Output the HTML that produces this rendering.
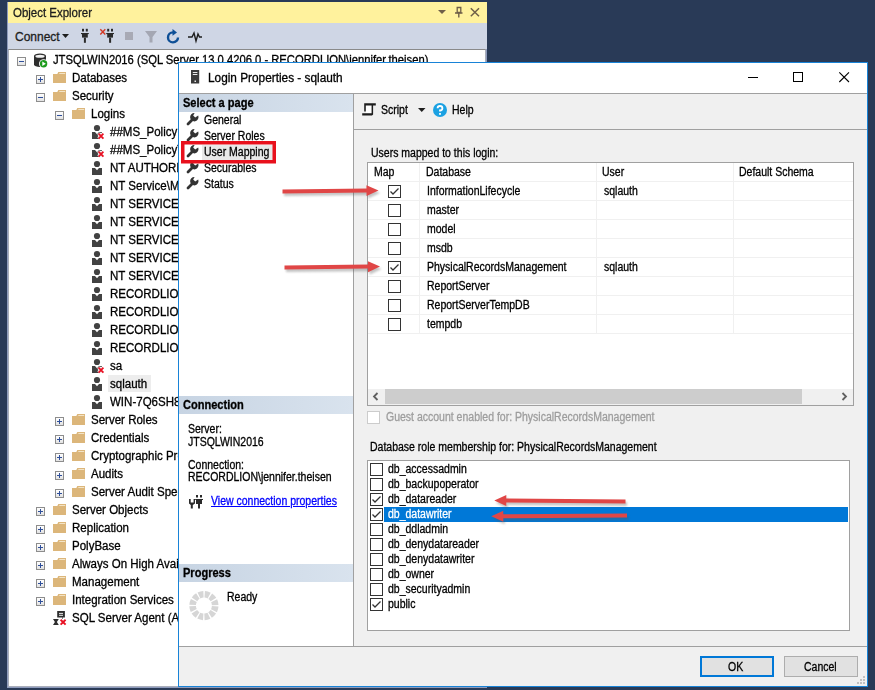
<!DOCTYPE html>
<html><head><meta charset="utf-8">
<style>
*{margin:0;padding:0;box-sizing:border-box}
html,body{width:875px;height:690px;overflow:hidden;background:#293a57;font-family:"Liberation Sans",sans-serif;position:relative}
.a{position:absolute}
.t{position:absolute;white-space:nowrap;line-height:1;transform-origin:0 0;-webkit-text-stroke:0.3px currentColor}
svg{position:absolute;overflow:visible}
</style></head><body>

<div class="a" style="left:7px;top:2px;width:480px;height:686px;background:#8e9bbc"></div>
<div class="a" style="left:8px;top:2px;width:479px;height:21px;background:#fff29d"></div>
<div class="a" style="left:8px;top:23px;width:479px;height:26px;background:#cfd6e5"></div>
<div class="a" style="left:8px;top:49px;width:478px;height:638px;background:#fff;border-top:1px solid #8a8a8a;border-right:1px solid #a9aebb;border-bottom:1px solid #a9aebb;border-left:1px solid #a9aebb"></div>
<div class="t" style="left:13px;top:7.40px;font-size:12px;transform:scaleX(0.955);color:#1e1e1e;font-weight:400;">Object Explorer</div>
<svg style="left:438px;top:7px" width="50" height="12"><path d="M0 3 L8 3 L4 7 Z" fill="#6f5f48"/><path d="M19.2 0.5 V5.5 H22.8 V0.5 Z" stroke="#6f5f48" stroke-width="1.3" fill="none"/><path d="M17 6 H24.5 M20.8 6 V10.5" stroke="#6f5f48" stroke-width="1.4" fill="none"/><path d="M32.8 1.2 L41 9.2 M41 1.2 L32.8 9.2" stroke="#6f5f48" stroke-width="1.5"/></svg>
<div class="t" style="left:15px;top:31.40px;font-size:12px;transform:scaleX(1.0);color:#1e1e1e;font-weight:400;">Connect</div>
<svg style="left:62px;top:34px" width="8" height="5"><path d="M0 0 H7 L3.5 4 Z" fill="#1e1e1e"/></svg>
<svg style="left:0;top:0" width="875" height="60"><g fill="#2b2b2b"><rect x="82" y="28.8" width="2" height="2.7"/><rect x="85.8" y="28.8" width="2" height="2.7"/><rect x="81" y="33.0" width="7.8" height="1.1"/><rect x="82" y="33.0" width="5.8" height="4.6"/><rect x="83.9" y="37.6" width="2" height="5.2"/></g><g fill="#2b2b2b"><rect x="107.2" y="28.8" width="2" height="2.7"/><rect x="111.0" y="28.8" width="2" height="2.7"/><rect x="106.2" y="33.0" width="7.8" height="1.1"/><rect x="107.2" y="33.0" width="5.8" height="4.6"/><rect x="109.10000000000001" y="37.6" width="2" height="5.2"/></g><path d="M100.3 29.3 L105.3 34.5 M105.3 29.3 L100.3 34.5" stroke="#d43a26" stroke-width="1.4"/><rect x="125" y="32" width="8" height="8" fill="#a8aab5"/><path d="M145 31 H157 L152.5 37 V42.5 H149.5 V37 Z" fill="#a4a7b3"/><path d="M178 37.4 A5 5 0 1 1 173 32.4" stroke="#0e4f96" stroke-width="2.4" fill="none"/><path d="M172.5 29 L177 32.4 L172.5 35.8 Z" fill="#0e4f96"/><path d="M188 37 H192 L194 33 L196 41 L198 34 L199.5 37 H202" stroke="#1e1e1e" stroke-width="1.4" fill="none"/></svg>
<div class="a" style="left:17px;top:57px;width:9px;height:9px;border:1px solid #8d8d8d;background:linear-gradient(#fff,#e2e2e2)"></div><div class="a" style="left:19px;top:61px;width:5px;height:1px;background:#2f4f9a"></div>
<svg style="left:34px;top:52.5px" width="16" height="16"><path d="M0 3 A6 2.6 0 0 1 12 3 V11.5 A6 2.6 0 0 1 0 11.5 Z" fill="#2e2e2e"/><ellipse cx="6" cy="3.2" rx="4.6" ry="1.5" fill="#f2f2f2"/><circle cx="9.6" cy="10.8" r="4.6" fill="#fff"/><circle cx="9.6" cy="10.8" r="3.7" fill="#1e9b1e"/><path d="M8.3 8.6 L11.8 10.8 L8.3 13 Z" fill="#fff"/></svg>
<div class="t" style="left:53px;top:54.40px;font-size:12px;transform:scaleX(0.935);color:#000;font-weight:400;">JTSQLWIN2016 (SQL Server 13.0.4206.0 - RECORDLION\jennifer.theisen)</div>
<div class="a" style="left:36px;top:75px;width:9px;height:9px;border:1px solid #8d8d8d;background:linear-gradient(#fff,#e2e2e2)"></div><div class="a" style="left:38px;top:79px;width:5px;height:1px;background:#2f4f9a"></div><div class="a" style="left:40px;top:77px;width:1px;height:5px;background:#2f4f9a"></div>
<svg style="left:53px;top:72px" width="14" height="12"><path d="M0 2 H4.3 L5.3 0 H13 V11 H0 Z" fill="#dcb67a"/><path d="M6.3 1.5 H12.2" stroke="#f3e4c6" stroke-width="1"/></svg>
<div class="t" style="left:71.6px;top:72.40px;font-size:12px;transform:scaleX(0.96);color:#000;font-weight:400;">Databases</div>
<div class="a" style="left:36px;top:93px;width:9px;height:9px;border:1px solid #8d8d8d;background:linear-gradient(#fff,#e2e2e2)"></div><div class="a" style="left:38px;top:97px;width:5px;height:1px;background:#2f4f9a"></div>
<svg style="left:53px;top:90px" width="14" height="12"><path d="M0 2 H4.3 L5.3 0 H13 V11 H0 Z" fill="#dcb67a"/><path d="M6.3 1.5 H12.2" stroke="#f3e4c6" stroke-width="1"/></svg>
<div class="t" style="left:71.6px;top:90.40px;font-size:12px;transform:scaleX(0.96);color:#000;font-weight:400;">Security</div>
<div class="a" style="left:55px;top:111px;width:9px;height:9px;border:1px solid #8d8d8d;background:linear-gradient(#fff,#e2e2e2)"></div><div class="a" style="left:57px;top:115px;width:5px;height:1px;background:#2f4f9a"></div>
<svg style="left:72px;top:108px" width="14" height="12"><path d="M0 2 H4.3 L5.3 0 H13 V11 H0 Z" fill="#dcb67a"/><path d="M6.3 1.5 H12.2" stroke="#f3e4c6" stroke-width="1"/></svg>
<div class="t" style="left:90.6px;top:108.40px;font-size:12px;transform:scaleX(0.96);color:#000;font-weight:400;">Logins</div>
<svg style="left:92px;top:125px" width="16" height="15"><circle cx="5" cy="3" r="3.1" fill="#424242"/><path d="M0 7 H3 L5 9.3 L7 7 H10 V14 H0 Z" fill="#424242"/><path d="M6.6 8.6 L11.4 13.6 M11.4 8.6 L6.6 13.6" stroke="#fff" stroke-width="3.6"/><path d="M6.6 8.6 L11.4 13.6 M11.4 8.6 L6.6 13.6" stroke="#e81123" stroke-width="1.8"/></svg>
<div class="t" style="left:109.5px;top:126.40px;font-size:12px;transform:scaleX(0.96);color:#000;font-weight:400;">##MS_PolicyEventProcessingLogin##</div>
<svg style="left:92px;top:143px" width="16" height="15"><circle cx="5" cy="3" r="3.1" fill="#424242"/><path d="M0 7 H3 L5 9.3 L7 7 H10 V14 H0 Z" fill="#424242"/><path d="M6.6 8.6 L11.4 13.6 M11.4 8.6 L6.6 13.6" stroke="#fff" stroke-width="3.6"/><path d="M6.6 8.6 L11.4 13.6 M11.4 8.6 L6.6 13.6" stroke="#e81123" stroke-width="1.8"/></svg>
<div class="t" style="left:109.5px;top:144.40px;font-size:12px;transform:scaleX(0.96);color:#000;font-weight:400;">##MS_PolicyTsqlExecutionLogin##</div>
<svg style="left:92px;top:161px" width="16" height="15"><circle cx="5" cy="3" r="3.1" fill="#424242"/><path d="M0 7 H3 L5 9.3 L7 7 H10 V14 H0 Z" fill="#424242"/></svg>
<div class="t" style="left:109.5px;top:162.40px;font-size:12px;transform:scaleX(0.96);color:#000;font-weight:400;">NT AUTHORITY\SYSTEM</div>
<svg style="left:92px;top:179px" width="16" height="15"><circle cx="5" cy="3" r="3.1" fill="#424242"/><path d="M0 7 H3 L5 9.3 L7 7 H10 V14 H0 Z" fill="#424242"/></svg>
<div class="t" style="left:109.5px;top:180.40px;font-size:12px;transform:scaleX(0.96);color:#000;font-weight:400;">NT Service\MSSQLSERVER</div>
<svg style="left:92px;top:197px" width="16" height="15"><circle cx="5" cy="3" r="3.1" fill="#424242"/><path d="M0 7 H3 L5 9.3 L7 7 H10 V14 H0 Z" fill="#424242"/></svg>
<div class="t" style="left:109.5px;top:198.40px;font-size:12px;transform:scaleX(0.96);color:#000;font-weight:400;">NT SERVICE\ReportServer</div>
<svg style="left:92px;top:215px" width="16" height="15"><circle cx="5" cy="3" r="3.1" fill="#424242"/><path d="M0 7 H3 L5 9.3 L7 7 H10 V14 H0 Z" fill="#424242"/></svg>
<div class="t" style="left:109.5px;top:216.40px;font-size:12px;transform:scaleX(0.96);color:#000;font-weight:400;">NT SERVICE\SQLSERVERAGENT</div>
<svg style="left:92px;top:233px" width="16" height="15"><circle cx="5" cy="3" r="3.1" fill="#424242"/><path d="M0 7 H3 L5 9.3 L7 7 H10 V14 H0 Z" fill="#424242"/></svg>
<div class="t" style="left:109.5px;top:234.40px;font-size:12px;transform:scaleX(0.96);color:#000;font-weight:400;">NT SERVICE\SQLTELEMETRY</div>
<svg style="left:92px;top:251px" width="16" height="15"><circle cx="5" cy="3" r="3.1" fill="#424242"/><path d="M0 7 H3 L5 9.3 L7 7 H10 V14 H0 Z" fill="#424242"/></svg>
<div class="t" style="left:109.5px;top:252.40px;font-size:12px;transform:scaleX(0.96);color:#000;font-weight:400;">NT SERVICE\SQLWriter</div>
<svg style="left:92px;top:269px" width="16" height="15"><circle cx="5" cy="3" r="3.1" fill="#424242"/><path d="M0 7 H3 L5 9.3 L7 7 H10 V14 H0 Z" fill="#424242"/></svg>
<div class="t" style="left:109.5px;top:270.40px;font-size:12px;transform:scaleX(0.96);color:#000;font-weight:400;">NT SERVICE\Winmgmt</div>
<svg style="left:92px;top:287px" width="16" height="15"><circle cx="5" cy="3" r="3.1" fill="#424242"/><path d="M0 7 H3 L5 9.3 L7 7 H10 V14 H0 Z" fill="#424242"/></svg>
<div class="t" style="left:109.5px;top:288.40px;font-size:12px;transform:scaleX(0.96);color:#000;font-weight:400;">RECORDLION\Administrator</div>
<svg style="left:92px;top:305px" width="16" height="15"><circle cx="5" cy="3" r="3.1" fill="#424242"/><path d="M0 7 H3 L5 9.3 L7 7 H10 V14 H0 Z" fill="#424242"/></svg>
<div class="t" style="left:109.5px;top:306.40px;font-size:12px;transform:scaleX(0.96);color:#000;font-weight:400;">RECORDLION\jennifer.theisen</div>
<svg style="left:92px;top:323px" width="16" height="15"><circle cx="5" cy="3" r="3.1" fill="#424242"/><path d="M0 7 H3 L5 9.3 L7 7 H10 V14 H0 Z" fill="#424242"/></svg>
<div class="t" style="left:109.5px;top:324.40px;font-size:12px;transform:scaleX(0.96);color:#000;font-weight:400;">RECORDLION\SQLAdmins</div>
<svg style="left:92px;top:341px" width="16" height="15"><circle cx="5" cy="3" r="3.1" fill="#424242"/><path d="M0 7 H3 L5 9.3 L7 7 H10 V14 H0 Z" fill="#424242"/></svg>
<div class="t" style="left:109.5px;top:342.40px;font-size:12px;transform:scaleX(0.96);color:#000;font-weight:400;">RECORDLION\svc_sql</div>
<svg style="left:92px;top:359px" width="16" height="15"><circle cx="5" cy="3" r="3.1" fill="#424242"/><path d="M0 7 H3 L5 9.3 L7 7 H10 V14 H0 Z" fill="#424242"/><path d="M6.6 8.6 L11.4 13.6 M11.4 8.6 L6.6 13.6" stroke="#fff" stroke-width="3.6"/><path d="M6.6 8.6 L11.4 13.6 M11.4 8.6 L6.6 13.6" stroke="#e81123" stroke-width="1.8"/></svg>
<div class="t" style="left:109.5px;top:360.40px;font-size:12px;transform:scaleX(0.96);color:#000;font-weight:400;">sa</div>
<div class="a" style="left:108px;top:375px;width:43px;height:17px;background:#ededed"></div>
<svg style="left:92px;top:377px" width="16" height="15"><circle cx="5" cy="3" r="3.1" fill="#424242"/><path d="M0 7 H3 L5 9.3 L7 7 H10 V14 H0 Z" fill="#424242"/></svg>
<div class="t" style="left:109.5px;top:378.40px;font-size:12px;transform:scaleX(0.96);color:#000;font-weight:400;">sqlauth</div>
<svg style="left:92px;top:395px" width="16" height="15"><circle cx="5" cy="3" r="3.1" fill="#424242"/><path d="M0 7 H3 L5 9.3 L7 7 H10 V14 H0 Z" fill="#424242"/></svg>
<div class="t" style="left:109.5px;top:396.40px;font-size:12px;transform:scaleX(0.96);color:#000;font-weight:400;">WIN-7Q6SH8\Administrator</div>
<div class="a" style="left:55px;top:417px;width:9px;height:9px;border:1px solid #8d8d8d;background:linear-gradient(#fff,#e2e2e2)"></div><div class="a" style="left:57px;top:421px;width:5px;height:1px;background:#2f4f9a"></div><div class="a" style="left:59px;top:419px;width:1px;height:5px;background:#2f4f9a"></div>
<svg style="left:72px;top:414px" width="14" height="12"><path d="M0 2 H4.3 L5.3 0 H13 V11 H0 Z" fill="#dcb67a"/><path d="M6.3 1.5 H12.2" stroke="#f3e4c6" stroke-width="1"/></svg>
<div class="t" style="left:90.6px;top:414.40px;font-size:12px;transform:scaleX(0.96);color:#000;font-weight:400;">Server Roles</div>
<div class="a" style="left:55px;top:435px;width:9px;height:9px;border:1px solid #8d8d8d;background:linear-gradient(#fff,#e2e2e2)"></div><div class="a" style="left:57px;top:439px;width:5px;height:1px;background:#2f4f9a"></div><div class="a" style="left:59px;top:437px;width:1px;height:5px;background:#2f4f9a"></div>
<svg style="left:72px;top:432px" width="14" height="12"><path d="M0 2 H4.3 L5.3 0 H13 V11 H0 Z" fill="#dcb67a"/><path d="M6.3 1.5 H12.2" stroke="#f3e4c6" stroke-width="1"/></svg>
<div class="t" style="left:90.6px;top:432.40px;font-size:12px;transform:scaleX(0.96);color:#000;font-weight:400;">Credentials</div>
<div class="a" style="left:55px;top:453px;width:9px;height:9px;border:1px solid #8d8d8d;background:linear-gradient(#fff,#e2e2e2)"></div><div class="a" style="left:57px;top:457px;width:5px;height:1px;background:#2f4f9a"></div><div class="a" style="left:59px;top:455px;width:1px;height:5px;background:#2f4f9a"></div>
<svg style="left:72px;top:450px" width="14" height="12"><path d="M0 2 H4.3 L5.3 0 H13 V11 H0 Z" fill="#dcb67a"/><path d="M6.3 1.5 H12.2" stroke="#f3e4c6" stroke-width="1"/></svg>
<div class="t" style="left:90.6px;top:450.40px;font-size:12px;transform:scaleX(0.96);color:#000;font-weight:400;">Cryptographic Providers</div>
<div class="a" style="left:55px;top:471px;width:9px;height:9px;border:1px solid #8d8d8d;background:linear-gradient(#fff,#e2e2e2)"></div><div class="a" style="left:57px;top:475px;width:5px;height:1px;background:#2f4f9a"></div><div class="a" style="left:59px;top:473px;width:1px;height:5px;background:#2f4f9a"></div>
<svg style="left:72px;top:468px" width="14" height="12"><path d="M0 2 H4.3 L5.3 0 H13 V11 H0 Z" fill="#dcb67a"/><path d="M6.3 1.5 H12.2" stroke="#f3e4c6" stroke-width="1"/></svg>
<div class="t" style="left:90.6px;top:468.40px;font-size:12px;transform:scaleX(0.96);color:#000;font-weight:400;">Audits</div>
<div class="a" style="left:55px;top:489px;width:9px;height:9px;border:1px solid #8d8d8d;background:linear-gradient(#fff,#e2e2e2)"></div><div class="a" style="left:57px;top:493px;width:5px;height:1px;background:#2f4f9a"></div><div class="a" style="left:59px;top:491px;width:1px;height:5px;background:#2f4f9a"></div>
<svg style="left:72px;top:486px" width="14" height="12"><path d="M0 2 H4.3 L5.3 0 H13 V11 H0 Z" fill="#dcb67a"/><path d="M6.3 1.5 H12.2" stroke="#f3e4c6" stroke-width="1"/></svg>
<div class="t" style="left:90.6px;top:486.40px;font-size:12px;transform:scaleX(0.96);color:#000;font-weight:400;">Server Audit Specifications</div>
<div class="a" style="left:36px;top:507px;width:9px;height:9px;border:1px solid #8d8d8d;background:linear-gradient(#fff,#e2e2e2)"></div><div class="a" style="left:38px;top:511px;width:5px;height:1px;background:#2f4f9a"></div><div class="a" style="left:40px;top:509px;width:1px;height:5px;background:#2f4f9a"></div>
<svg style="left:53px;top:504px" width="14" height="12"><path d="M0 2 H4.3 L5.3 0 H13 V11 H0 Z" fill="#dcb67a"/><path d="M6.3 1.5 H12.2" stroke="#f3e4c6" stroke-width="1"/></svg>
<div class="t" style="left:71.6px;top:504.40px;font-size:12px;transform:scaleX(0.96);color:#000;font-weight:400;">Server Objects</div>
<div class="a" style="left:36px;top:525px;width:9px;height:9px;border:1px solid #8d8d8d;background:linear-gradient(#fff,#e2e2e2)"></div><div class="a" style="left:38px;top:529px;width:5px;height:1px;background:#2f4f9a"></div><div class="a" style="left:40px;top:527px;width:1px;height:5px;background:#2f4f9a"></div>
<svg style="left:53px;top:522px" width="14" height="12"><path d="M0 2 H4.3 L5.3 0 H13 V11 H0 Z" fill="#dcb67a"/><path d="M6.3 1.5 H12.2" stroke="#f3e4c6" stroke-width="1"/></svg>
<div class="t" style="left:71.6px;top:522.40px;font-size:12px;transform:scaleX(0.96);color:#000;font-weight:400;">Replication</div>
<div class="a" style="left:36px;top:543px;width:9px;height:9px;border:1px solid #8d8d8d;background:linear-gradient(#fff,#e2e2e2)"></div><div class="a" style="left:38px;top:547px;width:5px;height:1px;background:#2f4f9a"></div><div class="a" style="left:40px;top:545px;width:1px;height:5px;background:#2f4f9a"></div>
<svg style="left:53px;top:540px" width="14" height="12"><path d="M0 2 H4.3 L5.3 0 H13 V11 H0 Z" fill="#dcb67a"/><path d="M6.3 1.5 H12.2" stroke="#f3e4c6" stroke-width="1"/></svg>
<div class="t" style="left:71.6px;top:540.40px;font-size:12px;transform:scaleX(0.96);color:#000;font-weight:400;">PolyBase</div>
<div class="a" style="left:36px;top:561px;width:9px;height:9px;border:1px solid #8d8d8d;background:linear-gradient(#fff,#e2e2e2)"></div><div class="a" style="left:38px;top:565px;width:5px;height:1px;background:#2f4f9a"></div><div class="a" style="left:40px;top:563px;width:1px;height:5px;background:#2f4f9a"></div>
<svg style="left:53px;top:558px" width="14" height="12"><path d="M0 2 H4.3 L5.3 0 H13 V11 H0 Z" fill="#dcb67a"/><path d="M6.3 1.5 H12.2" stroke="#f3e4c6" stroke-width="1"/></svg>
<div class="t" style="left:71.6px;top:558.40px;font-size:12px;transform:scaleX(0.96);color:#000;font-weight:400;">Always On High Availability</div>
<div class="a" style="left:36px;top:579px;width:9px;height:9px;border:1px solid #8d8d8d;background:linear-gradient(#fff,#e2e2e2)"></div><div class="a" style="left:38px;top:583px;width:5px;height:1px;background:#2f4f9a"></div><div class="a" style="left:40px;top:581px;width:1px;height:5px;background:#2f4f9a"></div>
<svg style="left:53px;top:576px" width="14" height="12"><path d="M0 2 H4.3 L5.3 0 H13 V11 H0 Z" fill="#dcb67a"/><path d="M6.3 1.5 H12.2" stroke="#f3e4c6" stroke-width="1"/></svg>
<div class="t" style="left:71.6px;top:576.40px;font-size:12px;transform:scaleX(0.96);color:#000;font-weight:400;">Management</div>
<div class="a" style="left:36px;top:597px;width:9px;height:9px;border:1px solid #8d8d8d;background:linear-gradient(#fff,#e2e2e2)"></div><div class="a" style="left:38px;top:601px;width:5px;height:1px;background:#2f4f9a"></div><div class="a" style="left:40px;top:599px;width:1px;height:5px;background:#2f4f9a"></div>
<svg style="left:53px;top:594px" width="14" height="12"><path d="M0 2 H4.3 L5.3 0 H13 V11 H0 Z" fill="#dcb67a"/><path d="M6.3 1.5 H12.2" stroke="#f3e4c6" stroke-width="1"/></svg>
<div class="t" style="left:71.6px;top:594.40px;font-size:12px;transform:scaleX(0.96);color:#000;font-weight:400;">Integration Services</div>
<svg style="left:53px;top:610px" width="16" height="16"><rect x="4.2" y="1" width="7.7" height="6.5" fill="#2e2e2e"/><path d="M6 3.4 H10 M6 5.3 H10" stroke="#fff" stroke-width="0.9"/><path d="M9.5 7.5 V8.6" stroke="#2e2e2e"/><path d="M0 9 H5.8 L3.9 12 L5.8 15 H0 L1.9 12 Z" fill="#2e2e2e"/><path d="M7.6 9.8 L12.6 14.6 M12.6 9.8 L7.6 14.6" stroke="#e81123" stroke-width="1.9"/></svg>
<div class="t" style="left:71.6px;top:612.40px;font-size:12px;transform:scaleX(0.96);color:#000;font-weight:400;">SQL Server Agent (Agent XPs disabled)</div>
<div class="a" style="left:178px;top:62px;width:690px;height:625px;background:#1883d7"></div>
<div class="a" style="left:179px;top:63px;width:688px;height:30px;background:#fff"></div>
<div class="a" style="left:179px;top:93px;width:688px;height:1px;background:#a0a0a0"></div>
<svg style="left:191px;top:70px" width="10" height="14"><rect x="0" y="0" width="8.2" height="13.5" fill="#3a3a3a"/><path d="M1.8 2.5 H6.4 M1.8 4.5 H6.4" stroke="#e8e8e8" stroke-width="1"/><rect x="3.5" y="10.5" width="1.5" height="1.5" fill="#e8e8e8"/></svg>
<div class="t" style="left:207.6px;top:72.40px;font-size:12px;transform:scaleX(0.985);color:#000;font-weight:400;">Login Properties - sqlauth</div>
<svg style="left:740px;top:70px" width="120" height="14"><path d="M8 7.5 H18" stroke="#000" stroke-width="1"/><rect x="53.5" y="2.5" width="9" height="9" stroke="#000" stroke-width="1" fill="none"/><path d="M99.3 2.3 L109 12 M109 2.3 L99.3 12" stroke="#000" stroke-width="1.1"/></svg>
<div class="a" style="left:179px;top:94px;width:174px;height:552px;background:#fff"></div>
<div class="a" style="left:353px;top:94px;width:1px;height:552px;background:#a0a0a0"></div>
<div class="a" style="left:179px;top:94px;width:174px;height:18px;background:linear-gradient(to right,#c7d4e3,#d9e3ee)"></div>
<div class="t" style="left:182.5px;top:97.30px;font-size:12px;transform:scaleX(0.92);color:#000;font-weight:700;">Select a page</div>
<svg style="left:185.5px;top:113px" width="13" height="13"><path d="M2 11 L6.5 6.5" stroke="#333" stroke-width="2.8" stroke-linecap="round"/><path d="M12.2 2.6 A4.2 4.2 0 1 1 8.6 0 L7.2 2.6 L9.2 4.6 L12.2 2.6 Z" fill="#333"/></svg>
<div class="t" style="left:203.7px;top:114.40px;font-size:12px;transform:scaleX(0.875);color:#000;font-weight:400;">General</div>
<svg style="left:185.5px;top:129px" width="13" height="13"><path d="M2 11 L6.5 6.5" stroke="#333" stroke-width="2.8" stroke-linecap="round"/><path d="M12.2 2.6 A4.2 4.2 0 1 1 8.6 0 L7.2 2.6 L9.2 4.6 L12.2 2.6 Z" fill="#333"/></svg>
<div class="t" style="left:203.7px;top:130.40px;font-size:12px;transform:scaleX(0.875);color:#000;font-weight:400;">Server Roles</div>
<div class="a" style="left:202px;top:145px;width:71px;height:16px;background:#e8e8e8"></div>
<svg style="left:185.5px;top:145px" width="13" height="13"><path d="M2 11 L6.5 6.5" stroke="#333" stroke-width="2.8" stroke-linecap="round"/><path d="M12.2 2.6 A4.2 4.2 0 1 1 8.6 0 L7.2 2.6 L9.2 4.6 L12.2 2.6 Z" fill="#333"/></svg>
<div class="t" style="left:203.7px;top:146.40px;font-size:12px;transform:scaleX(0.875);color:#000;font-weight:400;">User Mapping</div>
<svg style="left:185.5px;top:161px" width="13" height="13"><path d="M2 11 L6.5 6.5" stroke="#333" stroke-width="2.8" stroke-linecap="round"/><path d="M12.2 2.6 A4.2 4.2 0 1 1 8.6 0 L7.2 2.6 L9.2 4.6 L12.2 2.6 Z" fill="#333"/></svg>
<div class="t" style="left:203.7px;top:162.40px;font-size:12px;transform:scaleX(0.875);color:#000;font-weight:400;">Securables</div>
<svg style="left:185.5px;top:177px" width="13" height="13"><path d="M2 11 L6.5 6.5" stroke="#333" stroke-width="2.8" stroke-linecap="round"/><path d="M12.2 2.6 A4.2 4.2 0 1 1 8.6 0 L7.2 2.6 L9.2 4.6 L12.2 2.6 Z" fill="#333"/></svg>
<div class="t" style="left:203.7px;top:178.40px;font-size:12px;transform:scaleX(0.875);color:#000;font-weight:400;">Status</div>
<svg style="left:181px;top:141px" width="96" height="23"><rect x="1.75" y="1.75" width="91.5" height="19" fill="none" stroke="#e8101c" stroke-width="3.5"/></svg>
<div class="a" style="left:179px;top:396px;width:174px;height:18px;background:linear-gradient(to right,#c7d4e3,#d9e3ee)"></div>
<div class="t" style="left:182.5px;top:399.30px;font-size:12px;transform:scaleX(0.92);color:#000;font-weight:700;">Connection</div>
<div class="t" style="left:188.3px;top:423.40px;font-size:12px;transform:scaleX(0.875);color:#000;font-weight:400;">Server:</div>
<div class="t" style="left:188.3px;top:436.40px;font-size:12px;transform:scaleX(0.875);color:#000;font-weight:400;">JTSQLWIN2016</div>
<div class="t" style="left:188.3px;top:459.40px;font-size:12px;transform:scaleX(0.875);color:#000;font-weight:400;">Connection:</div>
<div class="t" style="left:188.3px;top:471.40px;font-size:12px;transform:scaleX(0.875);color:#000;font-weight:400;">RECORDLION\jennifer.theisen</div>
<svg style="left:188px;top:494px" width="16" height="16"><path d="M1 5 H2.7 V8.4 H5.6 V5 H7 V9.6 L4.8 11 V14.5 H2.8 V11 L1 9.6 Z" fill="#2a2a2a"/><path d="M8 1 H10 V3.6 H8 Z M12 1 H14 V3.6 H12 Z M7.2 5 H15 V6 H14 V10 H12 V14.5 H10 V10 H8 V6 H7.2 Z" fill="#2a2a2a"/></svg>
<div class="t" style="left:210.9px;top:495.40px;font-size:12px;transform:scaleX(0.875);color:#0000ff;font-weight:400;text-decoration:underline">View connection properties</div>
<div class="a" style="left:179px;top:564px;width:174px;height:18px;background:linear-gradient(to right,#c7d4e3,#d9e3ee)"></div>
<div class="t" style="left:182.5px;top:567.10px;font-size:12px;transform:scaleX(0.92);color:#000;font-weight:700;">Progress</div>
<svg style="left:189px;top:591px" width="30" height="30"><circle cx="14.9" cy="14.6" r="11.3" fill="none" stroke="#d6d6d6" stroke-width="6.6" stroke-dasharray="4.6 1.3" stroke-dashoffset="-0.65"/></svg>
<div class="t" style="left:227.4px;top:591.40px;font-size:12px;transform:scaleX(0.875);color:#000;font-weight:400;">Ready</div>
<div class="a" style="left:354px;top:94px;width:513px;height:35px;background:#f0f0f0"></div>
<div class="a" style="left:354px;top:129px;width:513px;height:1px;background:#a0a0a0"></div>
<div class="a" style="left:354px;top:130px;width:513px;height:516px;background:#f0f0f0"></div>
<svg style="left:362px;top:103px" width="15" height="14"><rect x="3.8" y="2.5" width="5.8" height="7.7" fill="#fff"/><path d="M2.2 0.2 H13.8 V2.5 H3.8 V8.6 H2.2 Z M9.6 2 H11.1 V11.5 L10 12.6 H0.2 V10.2 H9.6 Z" fill="#1e1e1e"/></svg>
<div class="t" style="left:381.2px;top:104.40px;font-size:12px;transform:scaleX(0.875);color:#000;font-weight:400;">Script</div>
<svg style="left:418px;top:108px" width="8" height="5"><path d="M0 0 H7.5 L3.75 4 Z" fill="#1e1e1e"/></svg>
<svg style="left:433px;top:103px" width="14" height="14"><circle cx="7" cy="7" r="7" fill="#1ba1e2"/><path d="M4.6 5.2 A2.4 2.2 0 1 1 7 7.4 V8.6" stroke="#fff" stroke-width="1.8" fill="none"/><rect x="6.1" y="10" width="1.8" height="1.8" fill="#fff"/></svg>
<div class="t" style="left:452.4px;top:104.40px;font-size:12px;transform:scaleX(0.875);color:#000;font-weight:400;">Help</div>
<div class="t" style="left:370.8px;top:147.40px;font-size:12px;transform:scaleX(0.875);color:#000;font-weight:400;">Users mapped to this login:</div>
<div class="a" style="left:367px;top:162px;width:487px;height:244px;background:#fff;border:1px solid #a0a0a0"></div>
<div class="a" style="left:368px;top:181px;width:485px;height:1px;background:#f0f0f0"></div>
<div class="a" style="left:368px;top:200px;width:485px;height:1px;background:#f0f0f0"></div>
<div class="a" style="left:368px;top:219px;width:485px;height:1px;background:#f0f0f0"></div>
<div class="a" style="left:368px;top:238px;width:485px;height:1px;background:#f0f0f0"></div>
<div class="a" style="left:368px;top:257px;width:485px;height:1px;background:#f0f0f0"></div>
<div class="a" style="left:368px;top:276px;width:485px;height:1px;background:#f0f0f0"></div>
<div class="a" style="left:368px;top:295px;width:485px;height:1px;background:#f0f0f0"></div>
<div class="a" style="left:368px;top:314px;width:485px;height:1px;background:#f0f0f0"></div>
<div class="a" style="left:368px;top:333px;width:485px;height:1px;background:#f0f0f0"></div>
<div class="a" style="left:419px;top:163px;width:1px;height:171px;background:#f0f0f0"></div>
<div class="a" style="left:596px;top:163px;width:1px;height:171px;background:#f0f0f0"></div>
<div class="a" style="left:733px;top:163px;width:1px;height:171px;background:#f0f0f0"></div>
<div class="t" style="left:374.3px;top:166.40px;font-size:12px;transform:scaleX(0.875);color:#000;font-weight:400;">Map</div>
<div class="t" style="left:425.7px;top:166.40px;font-size:12px;transform:scaleX(0.875);color:#000;font-weight:400;">Database</div>
<div class="t" style="left:602.4px;top:166.40px;font-size:12px;transform:scaleX(0.875);color:#000;font-weight:400;">User</div>
<div class="t" style="left:739.2px;top:166.40px;font-size:12px;transform:scaleX(0.875);color:#000;font-weight:400;">Default Schema</div>
<svg style="left:388px;top:185px" width="13" height="13"><rect x="0.5" y="0.5" width="12" height="12" fill="#fff" stroke="#333" stroke-width="1"/><path d="M2.5 6.5 L5 9 L10.5 3.5" stroke="#333" stroke-width="1.3" fill="none"/></svg>
<div class="t" style="left:427px;top:185.40px;font-size:12px;transform:scaleX(0.875);color:#000;font-weight:400;">InformationLifecycle</div>
<div class="t" style="left:603.6px;top:185.40px;font-size:12px;transform:scaleX(0.875);color:#000;font-weight:400;">sqlauth</div>
<svg style="left:388px;top:204px" width="13" height="13"><rect x="0.5" y="0.5" width="12" height="12" fill="#fff" stroke="#333" stroke-width="1"/></svg>
<div class="t" style="left:427px;top:204.40px;font-size:12px;transform:scaleX(0.875);color:#000;font-weight:400;">master</div>
<svg style="left:388px;top:223px" width="13" height="13"><rect x="0.5" y="0.5" width="12" height="12" fill="#fff" stroke="#333" stroke-width="1"/></svg>
<div class="t" style="left:427px;top:223.40px;font-size:12px;transform:scaleX(0.875);color:#000;font-weight:400;">model</div>
<svg style="left:388px;top:242px" width="13" height="13"><rect x="0.5" y="0.5" width="12" height="12" fill="#fff" stroke="#333" stroke-width="1"/></svg>
<div class="t" style="left:427px;top:242.40px;font-size:12px;transform:scaleX(0.875);color:#000;font-weight:400;">msdb</div>
<svg style="left:388px;top:261px" width="13" height="13"><rect x="0.5" y="0.5" width="12" height="12" fill="#fff" stroke="#333" stroke-width="1"/><path d="M2.5 6.5 L5 9 L10.5 3.5" stroke="#333" stroke-width="1.3" fill="none"/></svg>
<div class="t" style="left:427px;top:261.40px;font-size:12px;transform:scaleX(0.875);color:#000;font-weight:400;">PhysicalRecordsManagement</div>
<div class="t" style="left:603.6px;top:261.40px;font-size:12px;transform:scaleX(0.875);color:#000;font-weight:400;">sqlauth</div>
<svg style="left:388px;top:280px" width="13" height="13"><rect x="0.5" y="0.5" width="12" height="12" fill="#fff" stroke="#333" stroke-width="1"/></svg>
<div class="t" style="left:427px;top:280.40px;font-size:12px;transform:scaleX(0.875);color:#000;font-weight:400;">ReportServer</div>
<svg style="left:388px;top:299px" width="13" height="13"><rect x="0.5" y="0.5" width="12" height="12" fill="#fff" stroke="#333" stroke-width="1"/></svg>
<div class="t" style="left:427px;top:299.40px;font-size:12px;transform:scaleX(0.875);color:#000;font-weight:400;">ReportServerTempDB</div>
<svg style="left:388px;top:318px" width="13" height="13"><rect x="0.5" y="0.5" width="12" height="12" fill="#fff" stroke="#333" stroke-width="1"/></svg>
<div class="t" style="left:427px;top:318.40px;font-size:12px;transform:scaleX(0.875);color:#000;font-weight:400;">tempdb</div>
<div class="a" style="left:368px;top:389px;width:485px;height:16px;background:#f0f0f0"></div>
<div class="a" style="left:385px;top:389px;width:417px;height:15px;background:#cdcdcd"></div>
<svg style="left:372px;top:392px" width="8" height="9"><path d="M5.5 1 L2 4.5 L5.5 8" stroke="#606060" stroke-width="1.8" fill="none"/></svg>
<svg style="left:841px;top:392px" width="8" height="9"><path d="M1.5 1 L5 4.5 L1.5 8" stroke="#606060" stroke-width="1.8" fill="none"/></svg>
<svg style="left:367px;top:411px" width="13" height="13"><rect x="0.5" y="0.5" width="12" height="12" fill="#fff" stroke="#cccccc" stroke-width="1"/></svg>
<div class="t" style="left:386px;top:411.40px;font-size:12px;transform:scaleX(0.875);color:#9d9d9d;font-weight:400;">Guest account enabled for: PhysicalRecordsManagement</div>
<div class="t" style="left:370.4px;top:441.40px;font-size:12px;transform:scaleX(0.875);color:#000;font-weight:400;">Database role membership for: PhysicalRecordsManagement</div>
<div class="a" style="left:367px;top:460px;width:483px;height:171px;background:#fff;border:1px solid #a0a0a0"></div>
<div class="a" style="left:384px;top:507px;width:464px;height:15px;background:#0078d7"></div>
<svg style="left:370px;top:463px" width="13" height="13"><rect x="0.5" y="0.5" width="12" height="12" fill="#fff" stroke="#333" stroke-width="1"/></svg>
<div class="t" style="left:387.8px;top:463.40px;font-size:12px;transform:scaleX(0.875);color:#000;font-weight:400;">db_accessadmin</div>
<svg style="left:370px;top:478px" width="13" height="13"><rect x="0.5" y="0.5" width="12" height="12" fill="#fff" stroke="#333" stroke-width="1"/></svg>
<div class="t" style="left:387.8px;top:478.40px;font-size:12px;transform:scaleX(0.875);color:#000;font-weight:400;">db_backupoperator</div>
<svg style="left:370px;top:493px" width="13" height="13"><rect x="0.5" y="0.5" width="12" height="12" fill="#fff" stroke="#333" stroke-width="1"/><path d="M2.5 6.5 L5 9 L10.5 3.5" stroke="#333" stroke-width="1.3" fill="none"/></svg>
<div class="t" style="left:387.8px;top:493.40px;font-size:12px;transform:scaleX(0.875);color:#000;font-weight:400;">db_datareader</div>
<svg style="left:370px;top:508px" width="13" height="13"><rect x="0.5" y="0.5" width="12" height="12" fill="#fff" stroke="#333" stroke-width="1"/><path d="M2.5 6.5 L5 9 L10.5 3.5" stroke="#333" stroke-width="1.3" fill="none"/></svg>
<div class="t" style="left:387.8px;top:508.40px;font-size:12px;transform:scaleX(0.875);color:#fff;font-weight:400;">db_datawriter</div>
<svg style="left:370px;top:523px" width="13" height="13"><rect x="0.5" y="0.5" width="12" height="12" fill="#fff" stroke="#333" stroke-width="1"/></svg>
<div class="t" style="left:387.8px;top:523.40px;font-size:12px;transform:scaleX(0.875);color:#000;font-weight:400;">db_ddladmin</div>
<svg style="left:370px;top:538px" width="13" height="13"><rect x="0.5" y="0.5" width="12" height="12" fill="#fff" stroke="#333" stroke-width="1"/></svg>
<div class="t" style="left:387.8px;top:538.40px;font-size:12px;transform:scaleX(0.875);color:#000;font-weight:400;">db_denydatareader</div>
<svg style="left:370px;top:553px" width="13" height="13"><rect x="0.5" y="0.5" width="12" height="12" fill="#fff" stroke="#333" stroke-width="1"/></svg>
<div class="t" style="left:387.8px;top:553.40px;font-size:12px;transform:scaleX(0.875);color:#000;font-weight:400;">db_denydatawriter</div>
<svg style="left:370px;top:568px" width="13" height="13"><rect x="0.5" y="0.5" width="12" height="12" fill="#fff" stroke="#333" stroke-width="1"/></svg>
<div class="t" style="left:387.8px;top:568.40px;font-size:12px;transform:scaleX(0.875);color:#000;font-weight:400;">db_owner</div>
<svg style="left:370px;top:583px" width="13" height="13"><rect x="0.5" y="0.5" width="12" height="12" fill="#fff" stroke="#333" stroke-width="1"/></svg>
<div class="t" style="left:387.8px;top:583.40px;font-size:12px;transform:scaleX(0.875);color:#000;font-weight:400;">db_securityadmin</div>
<svg style="left:370px;top:598px" width="13" height="13"><rect x="0.5" y="0.5" width="12" height="12" fill="#fff" stroke="#333" stroke-width="1"/><path d="M2.5 6.5 L5 9 L10.5 3.5" stroke="#333" stroke-width="1.3" fill="none"/></svg>
<div class="t" style="left:387.8px;top:598.40px;font-size:12px;transform:scaleX(0.875);color:#000;font-weight:400;">public</div>
<div class="a" style="left:179px;top:646px;width:688px;height:1px;background:#a0a0a0"></div>
<div class="a" style="left:179px;top:647px;width:688px;height:39px;background:#f0f0f0"></div>
<div class="a" style="left:700px;top:656px;width:74px;height:21px;background:#e1e1e1;border:2px solid #0078d7"></div>
<div class="t" style="left:728px;top:661.40px;font-size:12px;transform:scaleX(0.875);color:#000;font-weight:400;">OK</div>
<div class="a" style="left:784px;top:656px;width:74px;height:21px;background:#e1e1e1;border:1px solid #adadad"></div>
<div class="t" style="left:804px;top:661.40px;font-size:12px;transform:scaleX(0.875);color:#000;font-weight:400;">Cancel</div>
<svg style="left:0;top:0" width="875" height="690"><defs><filter id="blur" x="-10%" y="-100%" width="120%" height="300%"><feGaussianBlur stdDeviation="1.2"/></filter></defs><g opacity="0.35" transform="translate(1.5,2.5)" filter="url(#blur)"><line x1="282.5" y1="191.5" x2="366.50" y2="190.62" stroke="#555" stroke-width="4"/><polygon points="378.5,190.5 366.56,196.12 366.44,185.13" fill="#555"/></g><line x1="282.5" y1="191.5" x2="367.50" y2="190.61" stroke="#e04646" stroke-width="4"/><polygon points="378.5,190.5 366.56,196.12 366.44,185.13" fill="#e04646"/><g opacity="0.35" transform="translate(1.5,2.5)" filter="url(#blur)"><line x1="284.5" y1="267.5" x2="368.00" y2="266.63" stroke="#555" stroke-width="4"/><polygon points="380,266.5 368.06,272.13 367.94,261.13" fill="#555"/></g><line x1="284.5" y1="267.5" x2="369.00" y2="266.62" stroke="#e04646" stroke-width="4"/><polygon points="380,266.5 368.06,272.13 367.94,261.13" fill="#e04646"/><g opacity="0.35" transform="translate(1.5,2.5)" filter="url(#blur)"><line x1="625.5" y1="501.5" x2="506.30" y2="500.59" stroke="#555" stroke-width="4"/><polygon points="494.3,500.5 506.34,495.09 506.26,506.09" fill="#555"/></g><line x1="625.5" y1="501.5" x2="505.30" y2="500.58" stroke="#e04646" stroke-width="4"/><polygon points="494.3,500.5 506.34,495.09 506.26,506.09" fill="#e04646"/><g opacity="0.35" transform="translate(1.5,2.5)" filter="url(#blur)"><line x1="627" y1="515.5" x2="503.30" y2="516.23" stroke="#555" stroke-width="4"/><polygon points="491.3,516.3 503.27,510.73 503.33,521.73" fill="#555"/></g><line x1="627" y1="515.5" x2="502.30" y2="516.24" stroke="#e04646" stroke-width="4"/><polygon points="491.3,516.3 503.27,510.73 503.33,521.73" fill="#e04646"/></svg>
<svg style="left:857px;top:676px" width="10" height="10"><rect x="6" y="0" width="2" height="2" fill="#c0c0c0"/><rect x="3" y="3" width="2" height="2" fill="#c0c0c0"/><rect x="6" y="3" width="2" height="2" fill="#c0c0c0"/><rect x="0" y="6" width="2" height="2" fill="#c0c0c0"/><rect x="3" y="6" width="2" height="2" fill="#c0c0c0"/><rect x="6" y="6" width="2" height="2" fill="#c0c0c0"/></svg>
</body></html>
